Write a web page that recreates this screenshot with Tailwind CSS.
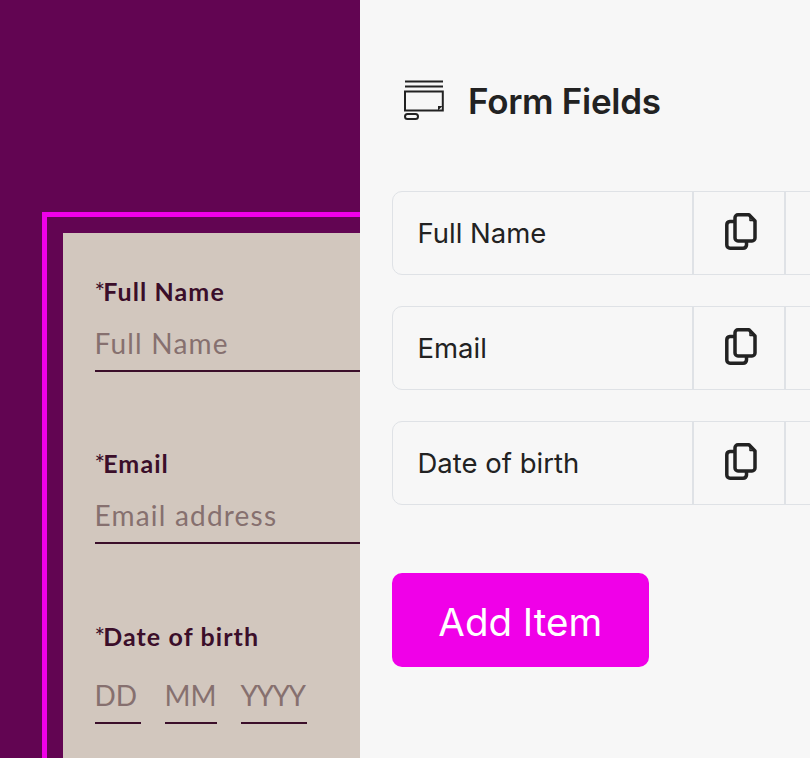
<!doctype html>
<html><head><meta charset="utf-8"><script src="https://cdn.jsdelivr.net/npm/@tailwindcss/browser@4"></script></head>
<body class="m-0">
<div class="flex w-[810px] h-[758px] overflow-hidden bg-[#f7f7f7]">
  <div class="w-[360px] h-full shrink-0 overflow-hidden bg-[#620552] pt-[212px] pl-[42px]">
    <div class="w-[400px] h-[600px] border-l-[5px] border-t-[5px] border-[#f000e8] pl-[16px] pt-[16px]">
      <div class="w-[400px] h-[600px] bg-[#d2c7be] pl-[31.5px] pt-[44px] text-[#3b0e2a] font-['Lato',sans-serif]">
        <div class="h-[30px] text-[25px] leading-[29px] font-bold tracking-[1.1px]"><span class="font-normal tracking-[-2px]">*</span>Full Name</div>
        <div class="mt-[19px] w-[400px] h-[46px] border-b-2 border-[#3b0e2a] text-[28px] leading-[34px] tracking-[1.2px] text-[#86706f]">Full Name</div>
        <div class="mt-[77px] h-[30px] text-[25px] leading-[29px] font-bold tracking-[1.1px]"><span class="font-normal tracking-[-2px]">*</span>Email</div>
        <div class="mt-[19px] w-[400px] h-[46px] border-b-2 border-[#3b0e2a] text-[28px] leading-[34px] tracking-[1.2px] text-[#86706f]">Email address</div>
        <div class="mt-[78px] h-[30px] text-[25px] leading-[29px] font-bold tracking-[1.1px]"><span class="font-normal tracking-[-2px]">*</span>Date of birth</div>
        <div class="mt-[26px] flex gap-[24px] text-[28px] leading-[34px] text-[#86706f]">
          <div class="w-[46px] h-[46px] border-b-2 border-[#3b0e2a]">DD</div>
          <div class="w-[52px] h-[46px] border-b-2 border-[#3b0e2a]">MM</div>
          <div class="w-[66px] h-[46px] border-b-2 border-[#3b0e2a] tracking-[-1.5px]">YYYY</div>
        </div>
      </div>
    </div>
  </div>
  <div class="flex-1 min-w-0 overflow-hidden pl-[31.5px] pt-[79px] font-['Inter',sans-serif] text-[#222222]">
    <div class="flex items-center gap-[24px] h-[44px] pl-[12.5px]">
      <svg class="w-[40px] h-[42px] shrink-0" viewBox="0 0 40 42" fill="none" stroke="#222222" stroke-width="2">
        <path d="M1 1.500H39M1 6.500H39"/>
        <path d="M1 11.500H38.800V30.500H1Z"/>
        <path d="M38.500 26H34L38.500 30.500Z" fill="#222222" stroke="none" transform="rotate(270 36.200 28.200)"/>
        <rect x="1" y="34" width="13" height="5" rx="2.500"/>
      </svg>
      <div class="text-[35px] leading-[44px] font-semibold tracking-[-0.3px]">Form Fields</div>
    </div>
    <div class="mt-[68px] flex flex-col gap-[31.500px]">
      <div class="flex w-[600px] h-[83.500px] rounded-[10px] border-[1.5px] border-[#dfe2e6]">
        <div class="w-[299.5px] shrink-0 pl-[25px] pt-[2px] flex items-center text-[27.500px]">Full Name</div>
        <div class="w-[93.500px] shrink-0 border-l-2 border-r-2 border-[#dfe2e6] flex items-center justify-center pb-[3px] pl-[5px]">
          <svg class="w-[32px] h-[37px]" viewBox="0 0 32 37" fill="none" stroke="#222222" stroke-width="3.500" stroke-linejoin="round"><path d="M13 1.800H24L30 8V25A3 3 0 0 1 27 28H13A3 3 0 0 1 10 25V4.800A3 3 0 0 1 13 1.800Z"/><path d="M25 2.500V7.500H30" stroke-width="1.500"/><path d="M10 8.500H5A3.500 3.500 0 0 0 1.800 12V32A3.200 3.200 0 0 0 5 35.200H18A3.500 3.500 0 0 0 21.500 32V28"/></svg>
        </div>
      </div>
      <div class="flex w-[600px] h-[83.500px] rounded-[10px] border-[1.5px] border-[#dfe2e6]">
        <div class="w-[299.5px] shrink-0 pl-[25px] pt-[2px] flex items-center text-[27.500px]">Email</div>
        <div class="w-[93.500px] shrink-0 border-l-2 border-r-2 border-[#dfe2e6] flex items-center justify-center pb-[3px] pl-[5px]">
          <svg class="w-[32px] h-[37px]" viewBox="0 0 32 37" fill="none" stroke="#222222" stroke-width="3.500" stroke-linejoin="round"><path d="M13 1.800H24L30 8V25A3 3 0 0 1 27 28H13A3 3 0 0 1 10 25V4.800A3 3 0 0 1 13 1.800Z"/><path d="M25 2.500V7.500H30" stroke-width="1.500"/><path d="M10 8.500H5A3.500 3.500 0 0 0 1.800 12V32A3.200 3.200 0 0 0 5 35.200H18A3.500 3.500 0 0 0 21.500 32V28"/></svg>
        </div>
      </div>
      <div class="flex w-[600px] h-[83.500px] rounded-[10px] border-[1.5px] border-[#dfe2e6]">
        <div class="w-[299.5px] shrink-0 pl-[25px] pt-[2px] flex items-center text-[27.500px]">Date of birth</div>
        <div class="w-[93.500px] shrink-0 border-l-2 border-r-2 border-[#dfe2e6] flex items-center justify-center pb-[3px] pl-[5px]">
          <svg class="w-[32px] h-[37px]" viewBox="0 0 32 37" fill="none" stroke="#222222" stroke-width="3.500" stroke-linejoin="round"><path d="M13 1.800H24L30 8V25A3 3 0 0 1 27 28H13A3 3 0 0 1 10 25V4.800A3 3 0 0 1 13 1.800Z"/><path d="M25 2.500V7.500H30" stroke-width="1.500"/><path d="M10 8.500H5A3.500 3.500 0 0 0 1.800 12V32A3.200 3.200 0 0 0 5 35.200H18A3.500 3.500 0 0 0 21.500 32V28"/></svg>
        </div>
      </div>
    </div>
    <div class="mt-[68.500px] w-[257.500px] h-[94px] rounded-[10px] bg-[#f000e8] text-white text-[38.500px] pt-[6px] flex items-center justify-center">Add Item</div>
  </div>
</div>
</body></html>
